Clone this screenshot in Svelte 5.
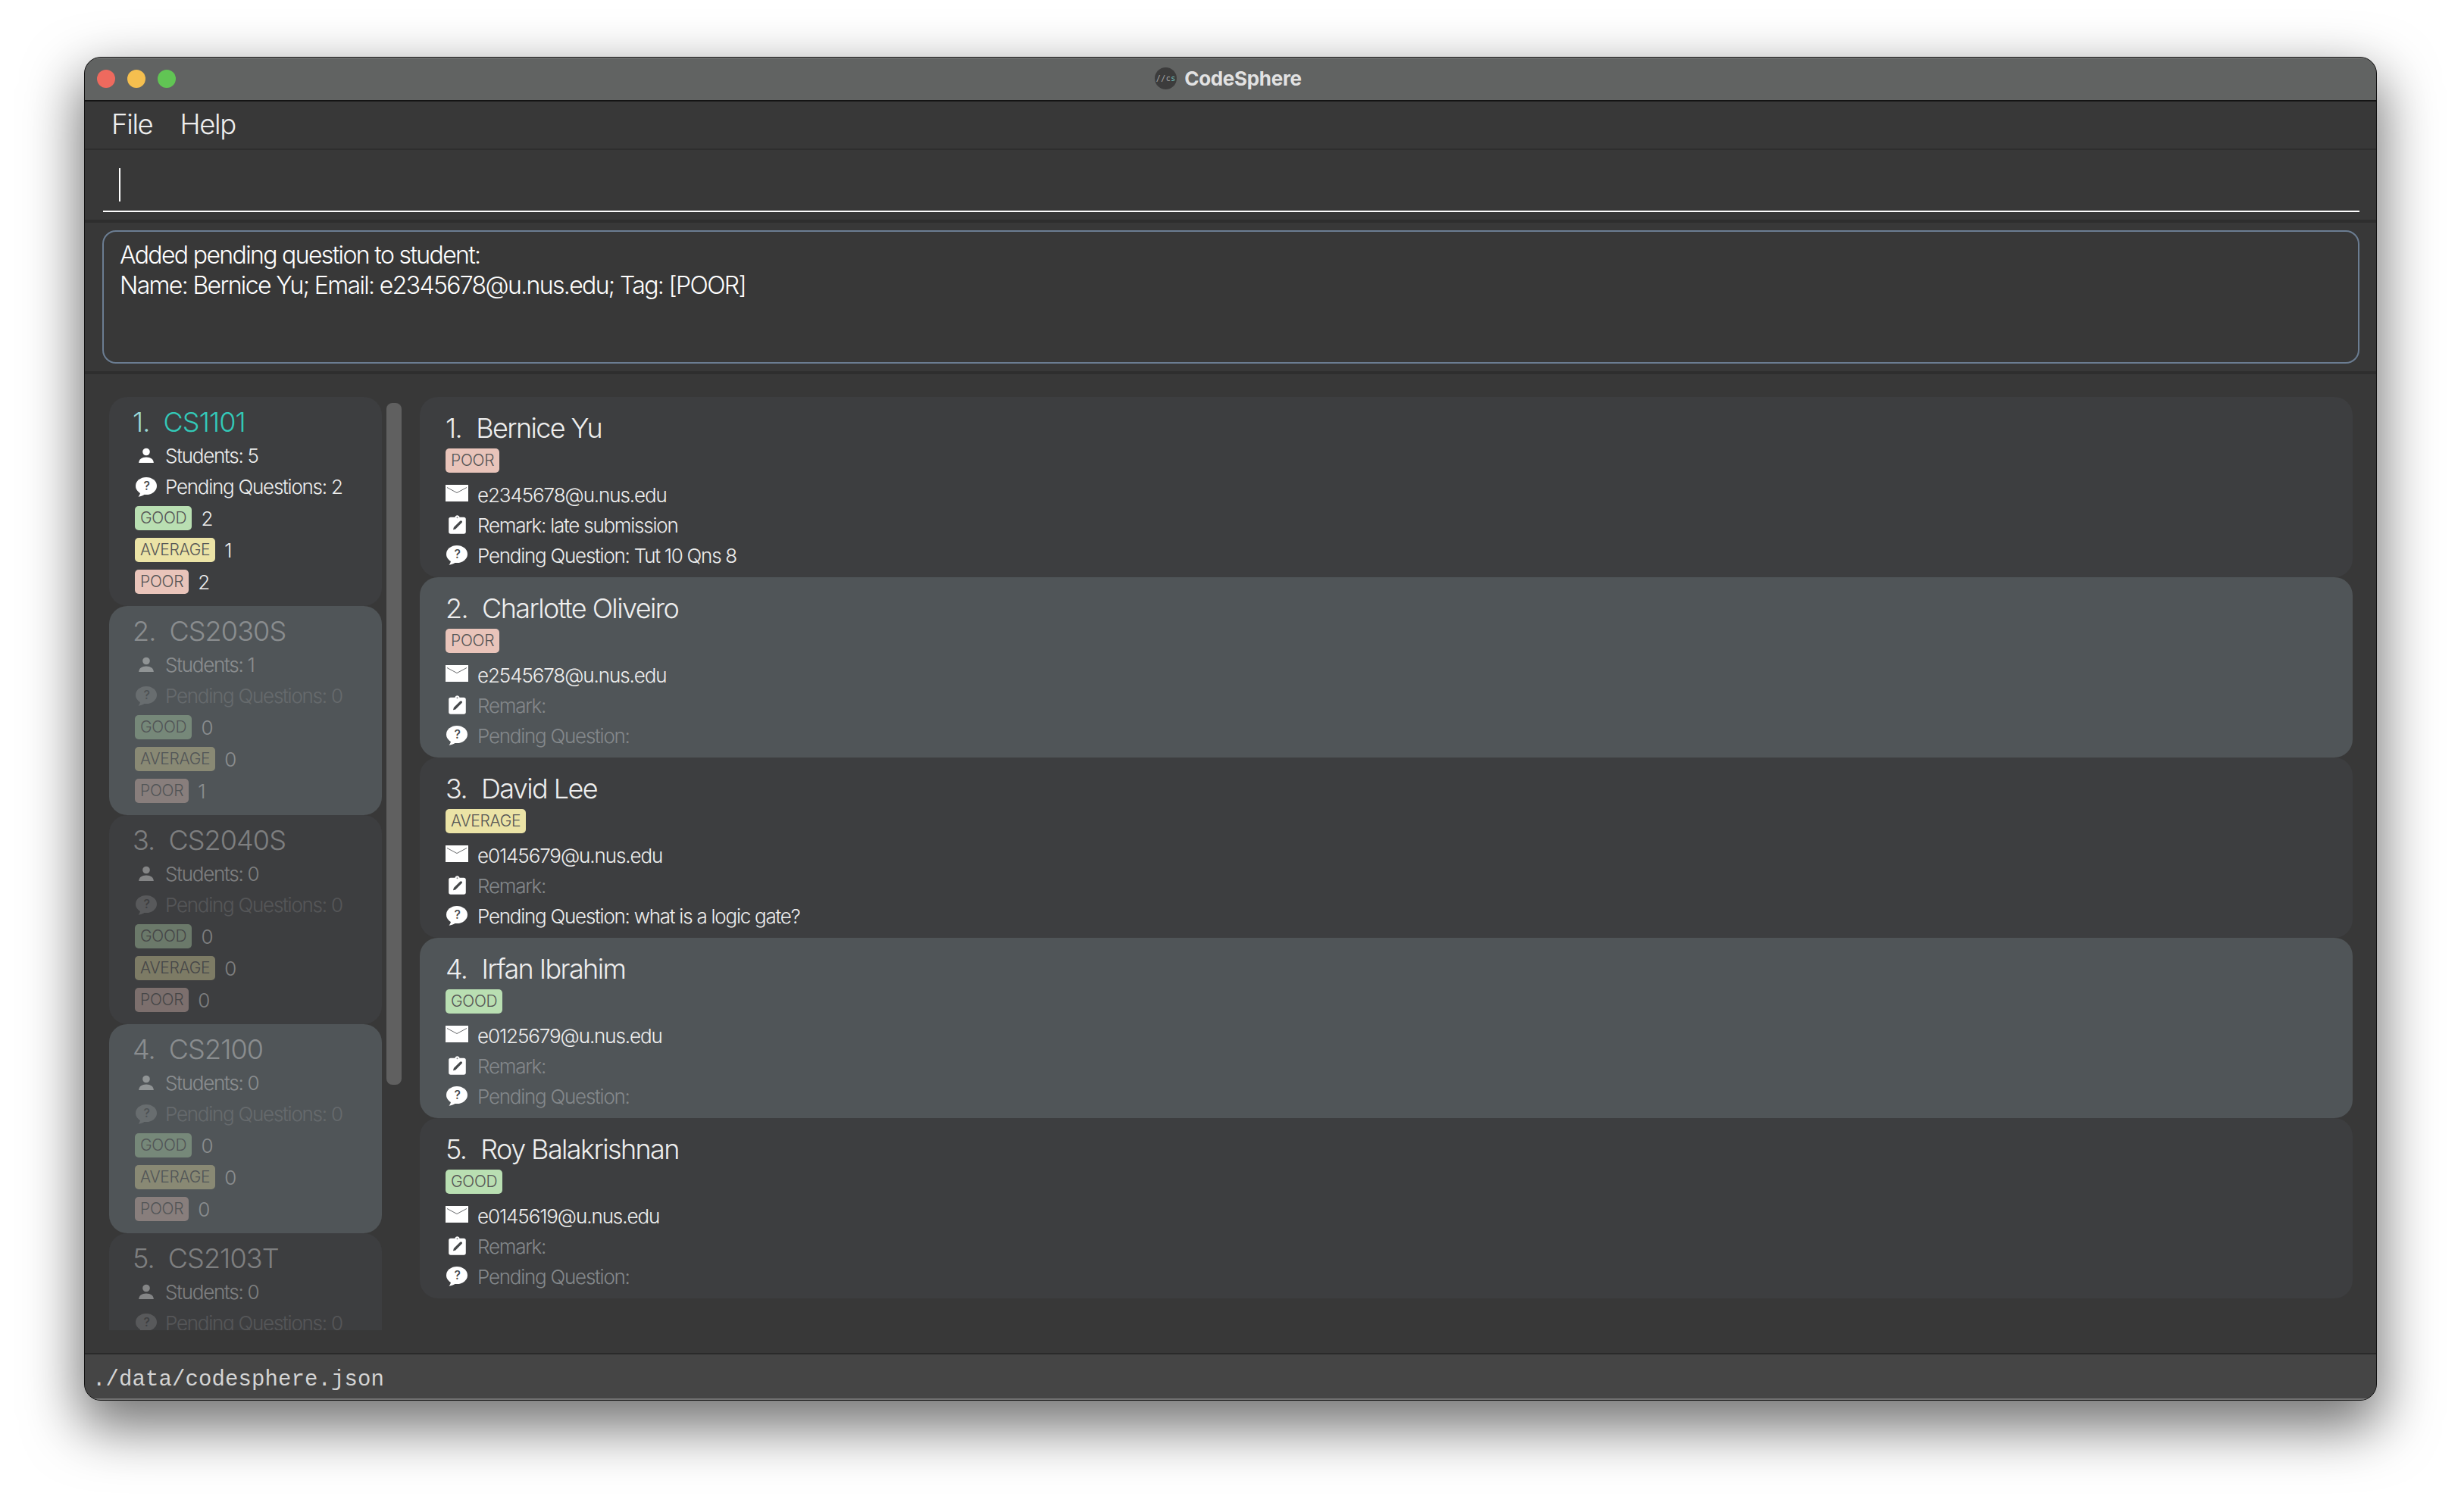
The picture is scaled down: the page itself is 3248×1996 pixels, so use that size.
<script>
  const modules = [
    { code: 'CS1101', students: 5, pending: 2, good: 2, average: 1, poor: 2, active: true },
    { code: 'CS2030S', students: 1, pending: 0, good: 0, average: 0, poor: 1 },
    { code: 'CS2040S', students: 0, pending: 0, good: 0, average: 0, poor: 0 },
    { code: 'CS2100', students: 0, pending: 0, good: 0, average: 0, poor: 0 },
    { code: 'CS2103T', students: 0, pending: 0, good: 0, average: 0, poor: 0 }
  ];

  const students = [
    { name: 'Bernice Yu', tag: 'POOR', email: 'e2345678@u.nus.edu', remark: 'late submission', question: 'Tut 10 Qns 8' },
    { name: 'Charlotte Oliveiro', tag: 'POOR', email: 'e2545678@u.nus.edu', remark: '', question: '' },
    { name: 'David Lee', tag: 'AVERAGE', email: 'e0145679@u.nus.edu', remark: '', question: 'what is a logic gate?' },
    { name: 'Irfan Ibrahim', tag: 'GOOD', email: 'e0125679@u.nus.edu', remark: '', question: '' },
    { name: 'Roy Balakrishnan', tag: 'GOOD', email: 'e0145619@u.nus.edu', remark: '', question: '' }
  ];
</script>

{#snippet bubble()}
  <svg class="bubble" viewBox="0 0 28 26">
    <ellipse cx="14" cy="11.500" rx="14" ry="11.500" fill="#fff" />
    <path fill="#fff" d="M6 19c.3 2.500-.7 4.800-2.500 6.700 3.500-.3 6.800-1.500 9-3.700z" />
    <text x="14" y="17" text-anchor="middle" class="q">?</text>
  </svg>
{/snippet}

{#snippet clip()}
  <svg class="clip" viewBox="0 0 23 25">
    <path fill="#fff" d="M8.500 2.800C8.700 1.200 10 .2 11.500 .2s2.800 1 3 2.600h5.700c1.600 0 2.600 1 2.600 2.500v17c0 1.500-1 2.500-2.600 2.500H2.800C1.200 24.800.2 23.800.2 22.300v-17c0-1.500 1-2.500 2.600-2.500z" />
    <path fill="#45484a" d="M15.200 7.800c.7-.7 1.700-.7 2.300 0 .7.600.7 1.600 0 2.300l-8.300 8.300-3.200.9.900-3.200z" />
    <circle cx="11.500" cy="3.300" r="1" fill="#8a8c8e" />
  </svg>
{/snippet}

<div class="page">
  <div class="window">
    <header class="titlebar">
      <div class="lights">
        <span class="light red"></span>
        <span class="light yellow"></span>
        <span class="light green"></span>
      </div>
      <div class="title">
        <span class="logo">//c<em>s</em></span>
        <span>CodeSphere</span>
      </div>
    </header>

    <nav class="menu">
      <span>File</span>
      <span>Help</span>
    </nav>

    <section class="command">
      <div class="command-line"><span class="caret"></span></div>
    </section>

    <section class="result">
      <div class="result-box">
        <p>Added pending question to student:</p>
        <p>Name: Bernice Yu; Email: e2345678@u.nus.edu; Tag: [POOR]</p>
      </div>
    </section>

    <main class="body">
      <aside class="modules">
        <div class="module-list">
          {#each modules as m, i}
            <article class="module" class:alt={i % 2 === 1} class:active={m.active}>
              <div class="module-inner">
                <h3><span class="num">{i + 1}.</span><span class="code">{m.code}</span></h3>
                <div class="line">
                  <svg class="person" viewBox="0 0 20 20">
                    <circle cx="10" cy="5.500" r="4.800" fill="#fff" />
                    <path fill="#fff" d="M.2 20c0-4.800 4-7.600 9.800-7.600s9.800 2.800 9.800 7.600z" />
                  </svg>
                  <span>Students: {m.students}</span>
                </div>
                <div class="line pending" class:none={m.pending === 0}>
                  {@render bubble()}
                  <span>Pending Questions: {m.pending}</span>
                </div>
                <div class="count"><span class="tag good">GOOD</span><span>{m.good}</span></div>
                <div class="count"><span class="tag average">AVERAGE</span><span>{m.average}</span></div>
                <div class="count"><span class="tag poor">POOR</span><span>{m.poor}</span></div>
              </div>
            </article>
          {/each}
        </div>
        <div class="scrollbar"><div class="thumb"></div></div>
      </aside>

      <div class="students">
        {#each students as s, i}
          <article class="student" class:alt={i % 2 === 1}>
            <h2><span class="num">{i + 1}.</span><span>{s.name}</span></h2>
            <div class="tag-row"><span class="tag {s.tag.toLowerCase()}">{s.tag}</span></div>
            <div class="row email">
              <svg class="mail" viewBox="0 0 30 22">
                <rect width="30" height="22" fill="#fff" />
                <path d="M2 3.500 15 10.500 28 3.500" fill="none" stroke="#6a6c6e" stroke-width="1" />
              </svg>
              <span>{s.email}</span>
            </div>
            <div class="row remark" class:empty={!s.remark}>
              {@render clip()}
              <span>Remark:{s.remark ? ' ' + s.remark : ''}</span>
            </div>
            <div class="row question" class:empty={!s.question}>
              {@render bubble()}
              <span>Pending Question:{s.question ? ' ' + s.question : ''}</span>
            </div>
          </article>
        {/each}
      </div>
    </main>

    <footer class="status">./data/codesphere.json</footer>
  </div>
</div>

<style>
  :global(body) {
    margin: 0;
    background: #fff;
  }

  .page {
    width: 3248px;
    height: 1996px;
    padding: 75px 111px 0 111px;
    box-sizing: border-box;
    overflow: hidden;
    font-family: Inter, "Liberation Sans", sans-serif;
    font-weight: 300;
  }

  .window {
    width: 3026px;
    height: 1774px;
    display: flex;
    flex-direction: column;
    box-sizing: border-box;
    border: 1px solid #111;
    border-radius: 22px;
    overflow: hidden;
    background: #383838;
    box-shadow: 0 30px 72px 6px rgba(0, 0, 0, 0.55);
  }

  .titlebar {
    flex: 0 0 56px;
    display: flex;
    align-items: center;
    justify-content: center;
    position: relative;
    background: #616362;
    border-bottom: 2px solid #141414;
    box-shadow: inset 0 1px 0 #8a8a8a;
  }

  .lights {
    position: absolute;
    left: 16px;
    top: 16px;
    display: flex;
    gap: 16px;
  }

  .light {
    width: 24px;
    height: 24px;
    border-radius: 50%;
  }

  .red { background: #ee6a5e; }
  .yellow { background: #f5bf4f; }
  .green { background: #61c554; }

  .title {
    display: flex;
    align-items: center;
    gap: 10px;
    color: #e2e2e2;
    font-size: 26px;
    font-weight: 700;
    font-family: Inter, sans-serif;
    letter-spacing: -0.3px;
    margin: -2px 0 0 -6px;
  }

  .logo {
    width: 29px;
    height: 29px;
    border-radius: 50%;
    background: #3c3c3c;
    color: #aaa;
    font-size: 10px;
    font-weight: 400;
    font-family: "DejaVu Sans Mono", monospace;
    letter-spacing: 0.5px;
    display: flex;
    align-items: center;
    justify-content: center;
  }

  .logo em {
    font-style: normal;
    color: #6fc0c0;
  }

  .menu {
    flex: 0 0 60px;
    display: flex;
    align-items: center;
    gap: 36px;
    padding: 0 0 2px 35px;
    color: #eee;
    font-size: 36.5px;
    border-bottom: 2px solid #2e2e2e;
    letter-spacing: -1.3px;
  }

  .command {
    flex: 0 0 96px;
    padding: 0 22px 0 24px;
    display: flex;
    box-sizing: border-box;
    border-bottom: 4px solid #2e2e2e;
  }

  .command-line {
    flex: 1;
    height: 80px;
    border-bottom: 2px solid #fff;
    position: relative;
  }

  .caret {
    position: absolute;
    left: 21px;
    top: 24px;
    width: 2px;
    height: 44px;
    background: #fff;
  }

  .result {
    flex: 0 0 200px;
    box-sizing: border-box;
    padding: 10px 22px 10px 23px;
    border-bottom: 4px solid #2e2e2e;
  }

  .result-box {
    height: 176px;
    box-sizing: border-box;
    border: 2px solid #6b7d92;
    border-radius: 18px;
    padding: 11px 20px 11px 21px;
    color: #fff;
    font-size: 32px;
    line-height: 40px;
    letter-spacing: -1.65px;
  }

  .result-box p {
    margin: 0;
  }

  .body {
    flex: 1;
    display: flex;
    min-height: 0;
    padding: 30px 32px 0 32px;
  }

  .modules {
    flex: 0 0 386px;
    height: 1232px;
    display: flex;
    gap: 6px;
  }

  .module-list {
    width: 360px;
    overflow: hidden;
  }

  .scrollbar {
    width: 20px;
    padding-top: 8px;
  }

  .thumb {
    height: 900px;
    border-radius: 8px;
    background: #606060;
  }

  .module {
    height: 276px;
    box-sizing: border-box;
    border-radius: 24px;
    background: #3d3e40;
  }

  .module.alt {
    background: #505558;
  }

  .module-inner {
    padding: 9px 0 0 34px;
    opacity: 0.37;
  }

  .module.active .module-inner {
    opacity: 1;
  }

  .module h3 {
    margin: 0 0 -1px -3px;
    font-size: 36px;
    line-height: 48px;
    font-weight: 300;
    color: #eee;
    display: flex;
    gap: 18px;
    letter-spacing: -0.9px;
  }

  .module.active h3 .num {
    color: #9ad8d8;
  }

  .module.active h3 .code {
    color: #33c9b8;
  }

  .line {
    height: 42px;
    display: flex;
    align-items: center;
    color: #eee;
    font-size: 26px;
    letter-spacing: -1.25px;
  }

  .line > span {
    margin-left: 15px;
  }

  .line.pending {
    height: 41px;
  }

  .line.pending > span {
    margin-left: 11px;
  }

  .line.none {
    opacity: 0.38;
  }

  .person {
    width: 20px;
    height: 20px;
    margin-left: 5px;
  }

  .bubble {
    width: 28px;
    height: 26px;
    flex: none;
  }

  .q {
    fill: #45484a;
    font-size: 16px;
    font-weight: 500;
    font-family: Inter, sans-serif;
  }

  .line .bubble {
    margin-left: 1px;
  }

  .count {
    height: 42px;
    display: flex;
    align-items: center;
    gap: 12px;
    color: #eee;
    font-size: 26px;
  }

  .tag {
    display: inline-block;
    height: 32px;
    line-height: 32px;
    padding: 0 7px;
    border-radius: 5px;
    font-size: 21px;
    color: #555;
    font-weight: 300;
    letter-spacing: -0.3px;
  }

  .good { background: #b9dfb2; }
  .average { background: #ebe3a6; }
  .poor { background: #e9c4ba; }

  .students {
    flex: 1;
    min-width: 0;
    padding-left: 24px;
    margin-right: -1px;
  }

  .student {
    height: 238px;
    box-sizing: border-box;
    border-radius: 24px;
    background: #3d3e40;
    padding: 16px 0 0 34px;
  }

  .student.alt {
    background: #505558;
  }

  .student h2 {
    margin: 0;
    height: 50px;
    line-height: 50px;
    font-size: 36px;
    font-weight: 300;
    color: #eee;
    display: flex;
    gap: 19px;
    letter-spacing: -1.6px;
  }

  .tag-row {
    height: 40px;
    padding-top: 2px;
    box-sizing: border-box;
  }

  .row {
    display: flex;
    align-items: center;
    color: #eee;
    font-size: 26px;
    letter-spacing: -1.25px;
  }

  .row.email,
  .row.question {
    height: 42px;
  }

  .row.email {
    letter-spacing: -1.1px;
  }

  .row.remark {
    height: 40px;
  }

  .row > span {
    margin-left: 12px;
  }

  .row.email > span {
    padding-top: 4px;
  }

  .row.remark > span {
    padding-top: 3px;
  }

  .row.empty > span {
    color: #84888b;
  }

  .mail {
    width: 30px;
    height: 22px;
    flex: none;
  }

  .clip {
    width: 23px;
    height: 25px;
    flex: none;
    margin: 0 3px 0 4px;
  }

  .row .bubble {
    margin: 0 1px;
  }

  .status {
    flex: 0 0 62px;
    box-sizing: border-box;
    background: #454545;
    border-top: 2px solid #2a2a2a;
    padding: 17px 0 0 10px;
    color: #d4d4d4;
    font-family: "Liberation Mono", monospace;
    font-size: 29px;
    font-weight: 400;
    line-height: 34px;
    letter-spacing: 0.1px;
    box-shadow: inset 0 -2px 0 #707070;
  }
</style>
